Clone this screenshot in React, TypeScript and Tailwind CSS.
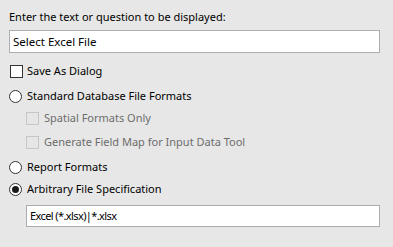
import React from 'react';

const Box = ({ disabled }: { disabled?: boolean }) => (
  <span
    className={
      'block h-[13px] w-[13px] shrink-0 border ' +
      (disabled ? 'border-[#c6c6c6] bg-[#e6e6e6]' : 'border-[#333333] bg-white')
    }
  />
);

const Radio = ({ checked }: { checked?: boolean }) => (
  <span className="flex h-[13px] w-[13px] shrink-0 items-center justify-center rounded-full border border-[#333333] bg-white">
    {checked && <span className="block h-[7px] w-[7px] rounded-full bg-[#1a1a1a]" />}
  </span>
);

export default function App() {
  return (
    <div
      className="h-[247px] w-[393px] bg-[#e7e7e7] px-[9px] pt-[9px] text-[11px] leading-[16px] text-black"
      style={{ fontFamily: '"Noto Sans", "Open Sans", sans-serif' }}
    >
      <div className="h-[16px]">Enter the text or question to be displayed:</div>
      <div className="mt-[5px] flex h-[23px] w-[371px] items-center border border-[#abadb3] bg-white px-[3px] text-[11.5px]">
        Select Excel File
      </div>

      <label className="mt-[10px] flex h-[16px] items-center gap-[4px] pl-px">
        <Box />
        <span>Save As Dialog</span>
      </label>

      <label className="mt-[9px] flex h-[16px] items-center gap-[5px]">
        <Radio />
        <span>Standard Database File Formats</span>
      </label>

      <div className="pl-[17px]">
        <label className="mt-[6px] flex h-[16px] items-center gap-[5px] text-[#6d6d6d]">
          <Box disabled />
          <span>Spatial Formats Only</span>
        </label>
        <label className="mt-[8px] flex h-[16px] items-center gap-[5px] text-[#6d6d6d]">
          <Box disabled />
          <span>Generate Field Map for Input Data Tool</span>
        </label>
      </div>

      <label className="mt-[9px] flex h-[16px] items-center gap-[5px]">
        <Radio />
        <span>Report Formats</span>
      </label>

      <label className="mt-[6px] flex h-[16px] items-center gap-[5px]">
        <Radio checked />
        <span>Arbitrary File Specification</span>
      </label>

      <div className="ml-[17px] mt-[8px] flex h-[22px] w-[354px] items-center border border-[#abadb3] bg-white px-[3px] tracking-[-0.6px]">
        Excel (*.xlsx)|*.xlsx
      </div>
    </div>
  );
}
